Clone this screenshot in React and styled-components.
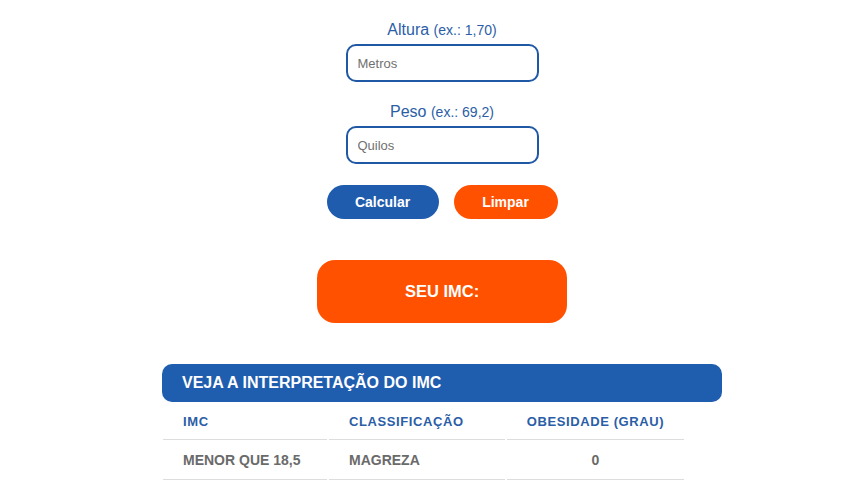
import React from 'react'
import styled, { createGlobalStyle } from 'styled-components'

const GlobalStyle = createGlobalStyle`
  * { box-sizing: border-box; }
  body {
    margin: 0;
    background: #ffffff;
    font-family: "Liberation Sans", Arial, sans-serif;
  }
`

const rows = [
    { imc: 'MENOR QUE 18,5', classe: 'MAGREZA', grau: '0' },
]

function App() {
    return (
        <>
            <GlobalStyle />
            <Page>
                <Form>
                    <Field>
                        <Label>Altura <small>(ex.: 1,70)</small></Label>
                        <Input placeholder="Metros" />
                    </Field>
                    <Field>
                        <Label>Peso <small>(ex.: 69,2)</small></Label>
                        <Input placeholder="Quilos" />
                    </Field>
                    <Buttons>
                        <Button $color="#1f5cad" $width={112}>Calcular</Button>
                        <Button $color="#ff5100" $width={104}>Limpar</Button>
                    </Buttons>
                </Form>
                <Result>SEU IMC:</Result>
                <Interpretation>
                    <Title>VEJA A INTERPRETAÇÃO DO IMC</Title>
                    <Table>
                        <colgroup>
                            <col style={{ width: 164 }} />
                            <col style={{ width: 176 }} />
                            <col style={{ width: 177 }} />
                        </colgroup>
                        <thead>
                            <tr>
                                <Th>IMC</Th>
                                <Th>CLASSIFICAÇÃO</Th>
                                <Th $center>OBESIDADE (GRAU)</Th>
                            </tr>
                        </thead>
                        <tbody>
                            {rows.map(row => (
                                <tr key={row.imc}>
                                    <Td>{row.imc}</Td>
                                    <Td>{row.classe}</Td>
                                    <Td $center>{row.grau}</Td>
                                </tr>
                            ))}
                        </tbody>
                    </Table>
                </Interpretation>
            </Page>
        </>
    )
}

export default App

const Page = styled.div`
    display: flex;
    flex-direction: column;
    align-items: center;
    padding: 20px 0 0 17px;
    width: 867px;
`

const Form = styled.div`
    display: flex;
    flex-direction: column;
    align-items: center;
`

const Field = styled.div`
    display: flex;
    flex-direction: column;
    align-items: center;
    margin-bottom: 20px;
`

const Label = styled.label`
    color: #2b5ea6;
    font-size: 16px;
    line-height: 20px;
    margin-bottom: 4px;
    > small{
        font-size: 14px;
    }
`

const Input = styled.input`
    width: 193px;
    height: 38px;
    border: 2px solid #1f58a4;
    border-radius: 10px;
    padding: 0 10px;
    font-family: "Liberation Sans", Arial, sans-serif;
    font-size: 13px;
    color: #333;
    outline: none;
    &::placeholder{
        color: #707070;
    }
`

const Buttons = styled.div`
    display: flex;
    gap: 15px;
    margin-top: 1px;
`

const Button = styled.button`
    width: ${p => p.$width}px;
    height: 34px;
    border: none;
    border-radius: 17px;
    background: ${p => p.$color};
    color: #ffffff;
    font-family: "Liberation Sans", Arial, sans-serif;
    font-weight: bold;
    font-size: 14px;
    cursor: pointer;
`

const Result = styled.div`
    width: 250px;
    height: 63px;
    margin-top: 41px;
    border-radius: 18px;
    background: #ff5100;
    color: #ffffff;
    font-size: 16.5px;
    font-weight: bold;
    display: flex;
    align-items: center;
    justify-content: center;
`

const Interpretation = styled.div`
    width: 560px;
    margin-top: 41px;
`

const Title = styled.div`
    height: 38px;
    border-radius: 10px;
    background: #1f5dae;
    color: #ffffff;
    font-size: 16px;
    font-weight: bold;
    display: flex;
    align-items: center;
    padding-left: 20px;
`

const Table = styled.table`
    border-collapse: separate;
    border-spacing: 2px 0;
    margin-left: -1px;
    table-layout: fixed;
`

const Th = styled.th`
    height: 38px;
    padding: 2px 0 0 ${p => (p.$center ? 0 : 20)}px;
    text-align: ${p => (p.$center ? 'center' : 'left')};
    color: #2b5ea6;
    font-size: 13px;
    font-weight: bold;
    letter-spacing: 0.6px;
    border-bottom: 1px solid #dddddd;
`

const Td = styled.td`
    height: 40px;
    padding: 0 0 0 ${p => (p.$center ? 0 : 20)}px;
    text-align: ${p => (p.$center ? 'center' : 'left')};
    color: #6a6a6a;
    font-size: 14px;
    font-weight: bold;
    border-bottom: 1px solid #dddddd;
`
